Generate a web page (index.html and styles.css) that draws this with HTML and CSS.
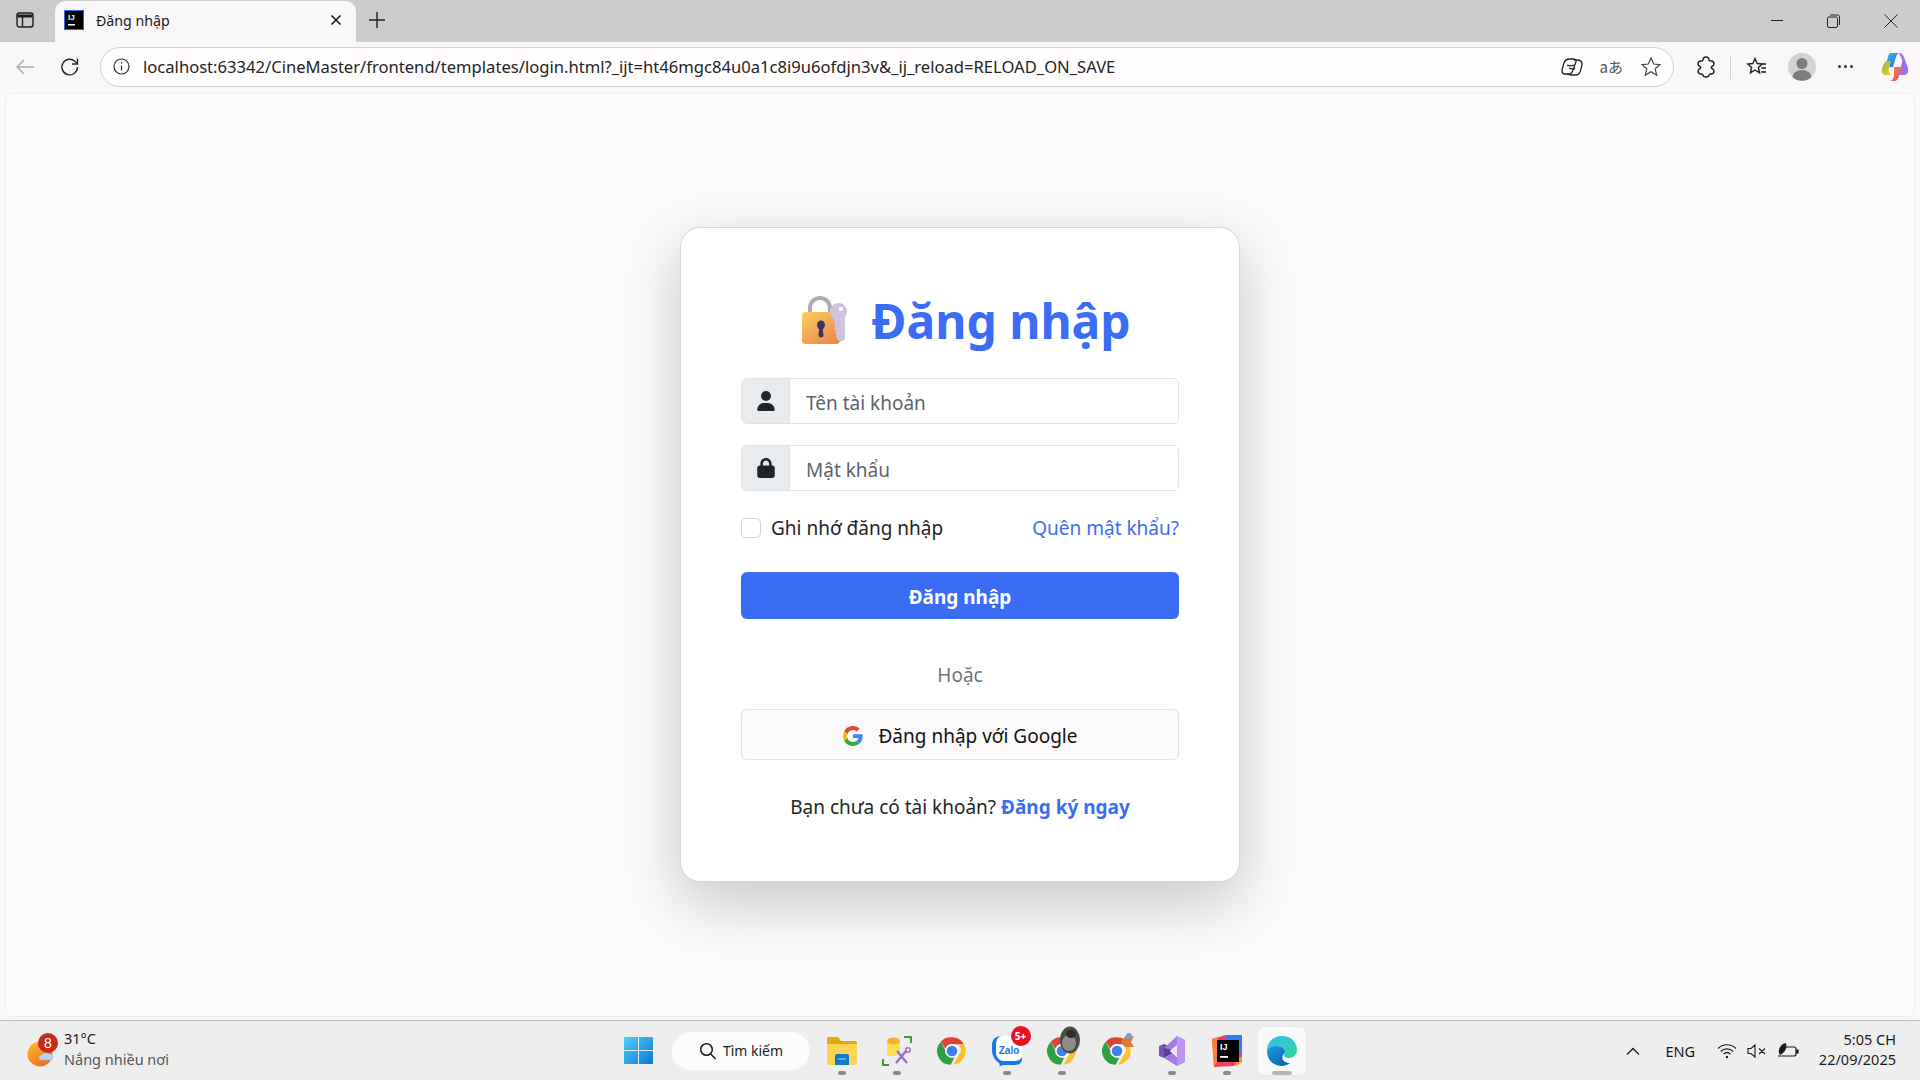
FILE: index.html
```html
<!DOCTYPE html>
<html lang="vi">
<head>
  <meta charset="utf-8">
  <title>Đăng nhập</title>
  <link rel="stylesheet" href="styles.css">
</head>
<body>
  <svg class="defs" width="0" height="0" aria-hidden="true">
    <defs>
      <symbol id="chrome" viewBox="0 0 48 48">
        <path d="M24 2a22 22 0 0 1 19 11H24a11 11 0 0 0-10.500 7.500L6 9A22 22 0 0 1 24 2z" fill="#db4437"/>
        <path d="M43 13a22 22 0 0 1-17 33l9-16a11 11 0 0 0-1-17z" fill="#fbc02d"/>
        <path d="M6 9l8 15a11 11 0 0 0 14 9.500L22 46A22 22 0 0 1 6 9z" fill="#2f9e44"/>
        <circle cx="24" cy="24" r="11" fill="#fff"/>
        <circle cx="24" cy="24" r="8.500" fill="#3f7fe8"/>
      </symbol>
    </defs>
  </svg>

  <header class="titlebar">
    <div class="sidebar-btn">
      <svg width="18" height="18" viewBox="0 0 18 18" fill="none" stroke="#1c1c1c" stroke-width="1.400">
        <rect x="1" y="2" width="16" height="14" rx="2.500"/>
        <path d="M1.500 5h15" stroke-width="3"/>
        <path d="M6.500 5v11"/>
      </svg>
    </div>
    <div class="tab">
      <svg class="favicon" width="20" height="20" viewBox="0 0 20 20">
        <rect x="0.500" y="0.500" width="19" height="19" fill="#000" stroke="#2c66d8"/>
        <text x="4" y="9.500" class="favicon-text">IJ</text>
        <rect x="4" y="14" width="7" height="1.500" fill="#fff"/>
      </svg>
      <span class="tab-title">Đăng nhập</span>
      <svg class="tab-close" width="12" height="12" viewBox="0 0 12 12" stroke="#1a1a1a" stroke-width="1.600">
        <path d="M1.500 1.500l9 9M10.500 1.500l-9 9"/>
      </svg>
    </div>
    <svg class="new-tab" width="18" height="18" viewBox="0 0 18 18" stroke="#222" stroke-width="1.400">
      <path d="M9 1v16M1 9h16"/>
    </svg>
    <div class="window-controls">
      <svg width="12" height="12" viewBox="0 0 12 12" stroke="#222"><path d="M0 5.500h12"/></svg>
      <svg width="13" height="14" viewBox="0 0 13 14" fill="none" stroke="#222"><rect x="0.500" y="3" width="10" height="10.500" rx="1.500"/><path d="M3 1h7.500A2 2 0 0 1 12.500 3v8"/></svg>
      <svg width="14" height="14" viewBox="0 0 14 14" stroke="#222"><path d="M0.500 0.500l13 13M13.500 0.500l-13 13"/></svg>
    </div>
  </header>

  <nav class="toolbar">
    <svg class="tool-icon" width="20" height="20" viewBox="0 0 20 20" fill="none" stroke="#a8a8a8" stroke-width="1.300">
      <path d="M19 10H2M9 3l-7 7 7 7"/>
    </svg>
    <svg class="tool-icon reload" width="22" height="22" viewBox="0 0 22 22" fill="none" stroke="#2b2b2b" stroke-width="1.400">
      <path d="M18.500 11a7.800 7.800 0 1 1-2.400-5.600L18.500 8"/>
      <path d="M18.500 2.500V8H13"/>
    </svg>
    <div class="address-bar">
      <svg width="17" height="17" viewBox="0 0 17 17" fill="none" stroke="#333" stroke-width="1.200">
        <circle cx="8.500" cy="8.500" r="7.500"/>
        <path d="M8.500 7.500v5M8.500 4.200v1.500"/>
      </svg>
      <span class="url">localhost:63342/CineMaster/frontend/templates/login.html?_ijt=ht46mgc84u0a1c8i9u6ofdjn3v&amp;_ij_reload=RELOAD_ON_SAVE</span>
      <div class="address-actions">
        <svg width="22" height="20" viewBox="0 0 22 20" fill="none" stroke="#222" stroke-width="1.300">
          <path d="M9 2c-3 0-5 1-6 4-1 3-2 6-2 8 0 2 1 3 3 3h4c2 0 3-1 4-4l3-8c.5-2-1-3-3-3z"/>
          <path d="M13 3h3c3 0 5 1 5 4 0 2-1 5-2 8-1 2-2 3-4 3h-5c-2 0-3-.5-4-1"/>
          <path d="M6 8c2 1 5 1 7 0M8 11c2 1 4 1 6 .5"/>
        </svg>
        <span class="translate-icon">aあ</span>
        <svg width="22" height="22" viewBox="0 0 22 22" fill="none" stroke="#444" stroke-width="1.200">
          <path d="M11 2l2.700 6 6.300.6-4.800 4.200 1.500 6.400L11 15.800l-5.700 3.400 1.500-6.400L2 8.600 8.300 8z"/>
        </svg>
      </div>
    </div>
    <div class="toolbar-right">
      <svg class="ext" width="20" height="22" viewBox="0 0 20 22" fill="none" stroke="#222" stroke-width="1.400">
        <path d="M7 4c0-2 1-3 3-3s3 1 3 3c0 1 1 1 2 1 2 0 3 1 3 3 0 1-1 2-2 2.500-1 .5-1 1.500 0 2 1 .5 2 1.500 2 2.500 0 2-1 3-3 3-1 0-2 0-2 1 0 1-1 2-3 2s-3-1-3-2c0-1-1-1-2-1-2 0-3-1-3-3 0-1 1-2 2-2.500 1-.5 1-1.500 0-2-1-.5-2-1.500-2-2.500 0-2 1-3 3-3 1 0 2 0 2-1z"/>
      </svg>
      <span class="sep"></span>
      <svg class="fav" width="22" height="22" viewBox="0 0 22 22" fill="none" stroke="#222" stroke-width="1.400">
        <path d="M9 2.500l2.200 5 5 .5-3.800 3.500 1.100 5.300L9 14l-4.500 2.800 1.100-5.300L1.800 8l5-.5z"/>
        <path d="M15 8h5M15.500 12h4.500M15 16h5"/>
      </svg>
      <svg class="avatar" width="28" height="28" viewBox="0 0 28 28">
        <circle cx="14" cy="14" r="14" fill="#d5d3d1"/>
        <circle cx="14" cy="10.500" r="5.500" fill="#7f7d7b"/>
        <path d="M4.500 24a9.500 7 0 0 1 19 0 14 14 0 0 1-19 0z" fill="#7f7d7b"/>
      </svg>
      <span class="more-dots"><i></i><i></i><i></i></span>
      <svg class="copilot" width="28" height="30" viewBox="0 0 28 30">
        <defs>
          <linearGradient id="copA" x1="0" y1="0" x2="1" y2="1"><stop offset="0" stop-color="#3bb5e8"/><stop offset="1" stop-color="#2f6fe0"/></linearGradient>
          <linearGradient id="copB" x1="0" y1="0" x2="1" y2="1"><stop offset="0" stop-color="#b06ce0"/><stop offset="1" stop-color="#8e7be8"/></linearGradient>
          <linearGradient id="copC" x1="0" y1="0" x2="1" y2="1"><stop offset="0" stop-color="#8cc63f"/><stop offset="1" stop-color="#f4c33d"/></linearGradient>
          <linearGradient id="copD" x1="0" y1="0" x2="1" y2="1"><stop offset="0" stop-color="#f08a4b"/><stop offset="1" stop-color="#e84f6c"/></linearGradient>
        </defs>
        <path d="M10 1h9c-2 0-3 1-4 4l-3 10H4l3-10c1-3 1-4 3-4z" fill="url(#copA)"/>
        <path d="M18 1c3 0 4 2 5 4l4 11c1 4-1 7-4 7h-6l4-12c1-3-1-5-3-10z" fill="url(#copB)"/>
        <path d="M5 9h5l-2 7c-1 3 0 6 3 7H5c-3 0-5-2-4-6 1-4 2-6 4-8z" fill="url(#copC)"/>
        <path d="M13 15h8l-3 9c-1 3-2 5-5 5h-5c3 0 4-2 5-5z" fill="url(#copD)"/>
      </svg>
    </div>
  </nav>

  <main class="page">
    <section class="login-card">
      <h1 class="login-title">
        <svg class="lock-emoji" width="48" height="50" viewBox="0 0 48 50">
          <defs>
            <linearGradient id="lockBody" x1="0" y1="0" x2="0.700" y2="1"><stop offset="0" stop-color="#fbd15f"/><stop offset="1" stop-color="#ee8a4e"/></linearGradient>
          </defs>
          <path d="M9 20V13a10 10 0 0 1 20 0v8" fill="none" stroke="#b0a9b0" stroke-width="4"/>
          <rect x="1" y="17" width="38" height="32" rx="4" fill="url(#lockBody)"/>
          <ellipse cx="20" cy="30" rx="4" ry="4.500" fill="#3b3468"/>
          <path d="M18.500 31h3l1 9a2.500 2.500 0 0 1-5 0z" fill="#3b3468"/>
          <path d="M33 24c-1 0-2-1-2-2a8.500 8.500 0 1 1 13 0v21a4 4 0 0 1-7 2l-2-3 1-2-2-2 1-2-2-2 1-2z" fill="#cfc3e0"/>
          <circle cx="40" cy="14" r="2.200" fill="#fff"/>
        </svg>
        <span>Đăng nhập</span>
      </h1>

      <form class="login-form">
        <div class="input-group">
          <span class="input-addon">
            <svg width="18" height="20" viewBox="0 0 448 512" fill="#212529"><path d="M224 256A128 128 0 1 0 224 0a128 128 0 1 0 0 256zm-45.700 48C79.800 304 0 383.800 0 482.300C0 498.700 13.300 512 29.700 512H418.300c16.400 0 29.700-13.300 29.700-29.700C448 383.800 368.200 304 269.700 304H178.300z"/></svg>
          </span>
          <input type="text" class="form-input" placeholder="Tên tài khoản">
        </div>
        <div class="input-group">
          <span class="input-addon">
            <svg width="18" height="20" viewBox="0 0 448 512" fill="#212529"><path d="M144 144v48H304V144c0-44.200-35.800-80-80-80s-80 35.800-80 80zM80 192V144C80 64.500 144.500 0 224 0s144 64.500 144 144v48h16c35.300 0 64 28.700 64 64V448c0 35.300-28.700 64-64 64H64c-35.300 0-64-28.700-64-64V256c0-35.300 28.700-64 64-64H80z"/></svg>
          </span>
          <input type="password" class="form-input" placeholder="Mật khẩu">
        </div>

        <div class="options-row">
          <label class="remember"><span class="checkbox"></span>Ghi nhớ đăng nhập</label>
          <a href="#" class="forgot">Quên mật khẩu?</a>
        </div>

        <button type="button" class="btn-login">Đăng nhập</button>
        <div class="divider">Hoặc</div>
        <button type="button" class="btn-google">
          <svg width="20" height="20" viewBox="0 0 48 48">
            <path fill="#ea4335" d="M24 9.500c3.500 0 6.700 1.200 9.200 3.600l6.900-6.900C35.900 2.400 30.500 0 24 0 14.600 0 6.500 5.400 2.600 13.200l8 6.200C12.500 13.700 17.800 9.500 24 9.500z"/>
            <path fill="#4285f4" d="M47 24.500c0-1.600-.1-3.100-.4-4.500H24v9h12.900c-.6 3-2.200 5.500-4.700 7.200l7.700 6c4.500-4.200 7.100-10.300 7.100-17.700z"/>
            <path fill="#fbbc05" d="M10.500 28.600c-.5-1.500-.8-3-.8-4.600s.3-3.200.8-4.600l-8-6.200C.9 16.500 0 20.100 0 24s.9 7.500 2.600 10.800z"/>
            <path fill="#34a853" d="M24 48c6.500 0 11.900-2.100 15.900-5.800l-7.700-6c-2.200 1.400-4.900 2.300-8.200 2.300-6.200 0-11.500-4.200-13.400-9.900l-8 6.200C6.500 42.600 14.600 48 24 48z"/>
          </svg>
          Đăng nhập với Google
        </button>
        <p class="signup">Bạn chưa có tài khoản? <a href="#">Đăng ký ngay</a></p>
      </form>
    </section>
  </main>

  <footer class="taskbar">
    <div class="weather">
      <svg class="weather-icon" width="36" height="36" viewBox="0 0 36 36">
        <defs>
          <linearGradient id="sun" x1="0" y1="0" x2="0.600" y2="1"><stop offset="0" stop-color="#f8c132"/><stop offset="1" stop-color="#f0701c"/></linearGradient>
        </defs>
        <circle cx="14" cy="21" r="12.500" fill="url(#sun)"/>
        <path d="M16 27c-2 0-3-1-3-2.500s1.500-2.500 3-2.500c1-2 5-3 7-1 2 0 4 1.500 4 3.500S25 27 24 27z" fill="#b7d3f4" stroke="#8fb4e6" stroke-width="0.500"/>
        <circle cx="22" cy="10" r="10" fill="#c42b1c"/>
        <text x="22" y="15" class="weather-count">8</text>
      </svg>
      <div class="weather-text">
        <span class="temp">31°C</span>
        <span class="forecast">Nắng nhiều nơi</span>
      </div>
    </div>

    <div class="task-center">
      <span class="start-btn">
        <svg width="29" height="29" viewBox="0 0 29 29">
          <defs><linearGradient id="win" x1="0" y1="0" x2="1" y2="1"><stop offset="0" stop-color="#4fd0fb"/><stop offset="1" stop-color="#0a78d6"/></linearGradient></defs>
          <path d="M1 1h13v13H0V2a1 1 0 0 1 1-1zM15 1h13a1 1 0 0 1 1 1v12H15zM0 15h14v13H1a1 1 0 0 1-1-1zM15 15h14v12a1 1 0 0 1-1 1H15z" fill="url(#win)"/>
        </svg>
      </span>
      <div class="search-box">
        <svg width="18" height="18" viewBox="0 0 18 18" fill="none" stroke="#1b1b1b" stroke-width="1.500"><circle cx="7.500" cy="7.500" r="5.800"/><path d="M11.500 11.800L16.500 17"/></svg>
        <span>Tìm kiếm</span>
      </div>

      <span class="app running">
        <svg width="30" height="28" viewBox="0 0 30 28">
          <path d="M0 2a2 2 0 0 1 2-2h9l3 4h14a2 2 0 0 1 2 2v4H0z" fill="#e2a60e"/>
          <path d="M0 7h30v19a2 2 0 0 1-2 2H2a2 2 0 0 1-2-2z" fill="#fcd455"/>
          <path d="M8 19a2 2 0 0 1 2-2h10a2 2 0 0 1 2 2v9H8z" fill="#0f78cf"/>
          <path d="M11 22h8" stroke="#6fc3f4" stroke-width="1.500"/>
        </svg>
      </span>
      <span class="app running">
        <svg width="30" height="30" viewBox="0 0 30 30" fill="none">
          <path d="M1 23v6h6M22 1h7v6" stroke="#3f9b3a" stroke-width="2"/>
          <path d="M5 5h13v12l-6 3H5z" fill="#fbe04b"/>
          <ellipse cx="11.500" cy="5" rx="6.500" ry="3.500" fill="#f2b035"/>
          <path d="M14 27l10-12M25 27L15 15" stroke="#9a6ad0" stroke-width="2.400"/>
          <circle cx="26" cy="14" r="2.200" stroke="#9a6ad0" stroke-width="1.500"/>
        </svg>
      </span>
      <span class="app">
        <svg width="30" height="30"><use href="#chrome"/></svg>
      </span>
      <span class="app running">
        <svg width="30" height="34" viewBox="0 0 30 34">
          <path d="M10 2h12c5 0 8 3 8 8v15c0 4-3 6-7 6H12c-2 0-3 1-5 1.500 1-1.500 1-2.500 0-3.500C3 26 0 22 0 16v-5C0 5 4 2 10 2z" fill="#1677ee"/>
          <path d="M10 2h12c5 0 8 3 8 8v13c-2 3-4 4-7 4H11c-3 0-6-3-7-7v-9c0-5 2-9 6-9z" fill="#fff"/>
          <text x="17" y="20" class="zalo-text">Zalo</text>
        </svg>
        <span class="app-badge">5+</span>
      </span>
      <span class="app running">
        <svg width="30" height="30"><use href="#chrome"/></svg>
        <svg class="app-overlay" width="22" height="28" viewBox="0 0 22 28">
          <ellipse cx="11" cy="14" rx="10" ry="13.500" fill="#4a4a48"/>
          <ellipse cx="10" cy="17" rx="7" ry="8" fill="#8c8c88"/>
          <ellipse cx="12" cy="8" rx="5" ry="4" fill="#2e2e2c"/>
        </svg>
      </span>
      <span class="app">
        <svg width="30" height="30"><use href="#chrome"/></svg>
        <svg class="app-overlay small" width="16" height="16" viewBox="0 0 16 16">
          <path d="M1 10l6-8 2 3 5-1-3 6 3 5H5z" fill="#d9793a"/>
          <circle cx="9" cy="4" r="3" fill="#6ea3d8"/>
        </svg>
      </span>
      <span class="app running">
        <svg width="26" height="30" viewBox="0 0 26 30">
          <path d="M0 10l5-2 9 7-9 7-5-2z" fill="#7b54b6"/>
          <path d="M5 8l13 7-13 7z" fill="#5d3e99"/>
          <path d="M18 0l8 4v22l-8 4-13-8 13-7-13-3z" fill="#a67ae6"/>
          <path d="M18 9v12l-7-6z" fill="#eee"/>
          <path d="M18 0l8 4v22l-8 4z" fill="#bd95ef"/>
          <path d="M18 9l-7 6 7 6z" fill="#efe6fb"/>
        </svg>
      </span>
      <span class="app running">
        <svg width="30" height="32" viewBox="0 0 30 32">
          <path d="M0 4l14-4 16 1v22l-8 8-20 1z" fill="#ef3f5f"/>
          <path d="M14 0h16v18L14 12z" fill="#2f7df0"/>
          <path d="M0 4l6-2v24l-4 5z" fill="#f5803a"/>
          <path d="M22 22h8v5l-6 4z" fill="#f7941d"/>
          <rect x="5" y="5" width="22" height="22" fill="#000"/>
          <text x="8" y="15" class="ij-text">IJ</text>
          <rect x="8" y="21" width="8" height="1.800" fill="#fff"/>
        </svg>
      </span>
      <span class="app active">
        <svg width="30" height="30" viewBox="0 0 30 30">
          <defs>
            <linearGradient id="edgeA" x1="0" y1="0" x2="1" y2="1"><stop offset="0" stop-color="#35c1f1"/><stop offset="1" stop-color="#2fd39a"/></linearGradient>
            <linearGradient id="edgeB" x1="0" y1="0" x2="1" y2="1"><stop offset="0" stop-color="#1b9de2"/><stop offset="1" stop-color="#0c5aa8"/></linearGradient>
          </defs>
          <path d="M15 0c9 0 15 6 15 14 0 5-4 8-8 8-3 0-5-1-5-3 0-1 1-1 1-3 0-3-3-6-8-6S1 13 0 15C0 6 6 0 15 0z" fill="url(#edgeA)"/>
          <path d="M0 15c1-3 5-5 9-5 6 0 9 3 9 6 0 1-1 2-2 3-2 4 1 8 7 8 0 0-4 3-8 3C6 30 0 24 0 15z" fill="url(#edgeB)"/>
        </svg>
      </span>
    </div>

    <div class="tray">
      <svg width="14" height="8" viewBox="0 0 14 8" fill="none" stroke="#1b1b1b" stroke-width="1.400"><path d="M1 7.500l6-6 6 6"/></svg>
      <span class="lang">ENG</span>
      <svg class="wifi" width="20" height="16" viewBox="0 0 20 16" fill="none" stroke="#1b1b1b" stroke-width="1.200">
        <path d="M1 5.500c5-5 13-5 18 0M3.800 8.500c3.500-3.500 8.900-3.500 12.400 0M6.600 11.200c2-2 4.800-2 6.800 0"/>
        <circle cx="10" cy="14" r="1.200" fill="#1b1b1b" stroke="none"/>
      </svg>
      <svg class="volume" width="20" height="14" viewBox="0 0 20 14" fill="none" stroke="#1b1b1b" stroke-width="1.100">
        <path d="M1 4.500h3L8 1v12L4 9.500H1zM12 4.500l6 5.500M18 4.500L12 10"/>
      </svg>
      <svg class="battery" width="22" height="18" viewBox="0 0 22 18" fill="none" stroke="#1b1b1b" stroke-width="1.200">
        <path d="M9 5h8a2 2 0 0 1 2 2v5a2 2 0 0 1-2 2H1"/>
        <path d="M19 8h2v3h-2" fill="#1b1b1b"/>
        <path d="M3 13C0 9 3 2 9 1c1 4 0 9-6 12z" fill="#1b1b1b" stroke="none"/>
      </svg>
      <div class="clock">
        <span>5:05 CH</span>
        <span>22/09/2025</span>
      </div>
    </div>
  </footer>
</body>
</html>
```
FILE: styles.css
```css
* {
  box-sizing: border-box;
}

html,
body {
  height: 100%;
}

body {
  margin: 0;
  display: flex;
  flex-direction: column;
  height: 1080px;
  overflow: hidden;
  font-family: "Noto Sans", "Open Sans", sans-serif;
  background-color: #f9f7f8;
  color: #212529;
}

.defs {
  position: absolute;
}

/* Browser title bar */
.titlebar {
  display: flex;
  align-items: center;
  flex: 0 0 42px;
  padding-bottom: 3px;
  background-color: #cdcccd;
}

.sidebar-btn {
  display: flex;
  justify-content: center;
  width: 55px;
  padding-right: 5px;
}

.tab {
  display: flex;
  align-items: center;
  align-self: stretch;
  width: 301px;
  margin-top: 1px;
  margin-bottom: -3px;
  padding: 0 14px 3px 9px;
  background-color: #f9f7f8;
  border-radius: 10px 10px 0 0;
}

.favicon-text {
  font-family: "Liberation Sans", sans-serif;
  font-size: 8px;
  font-weight: 700;
  fill: #fff;
}

.tab-title {
  flex: 1;
  margin-left: 12px;
  font-size: 14.200px;
  color: #1a1a1a;
}

.new-tab {
  margin-left: 12px;
}

.window-controls {
  display: flex;
  align-items: center;
  gap: 44px;
  margin-left: auto;
  margin-right: 22px;
  padding-top: 2px;
}

/* Browser toolbar */
.toolbar {
  display: flex;
  align-items: center;
  flex: 0 0 51px;
  padding: 0 0 2px 15px;
  background-color: #f9f7f8;
}

.reload {
  margin-left: 24px;
}

.address-bar {
  display: flex;
  align-items: center;
  flex: 0 0 1574px;
  height: 40px;
  margin-left: 19px;
  padding: 0 11px 0 12px;
  background-color: #fffdfe;
  border: 1.500px solid #d2d0d1;
  border-radius: 20px;
}

.url {
  margin-left: 13px;
  font-size: 16.600px;
  color: #242424;
  white-space: nowrap;
}

.address-actions {
  display: flex;
  align-items: center;
  gap: 17px;
  margin-left: auto;
}

.translate-icon {
  font-family: "Noto Sans CJK JP", sans-serif;
  font-size: 15px;
  color: #555;
}

.toolbar-right {
  display: flex;
  align-items: center;
  margin-left: 22px;
}

.sep {
  width: 1px;
  height: 24px;
  margin: 0 15px 0 14px;
  background-color: #d0cecf;
}

.avatar {
  margin-left: 20px;
}

.more-dots {
  display: flex;
  gap: 3px;
  margin-left: 22px;
}

.more-dots i {
  width: 3px;
  height: 3px;
  background-color: #333;
  border-radius: 50%;
}

.copilot {
  margin-left: 28px;
}

/* Page area */
.page {
  display: flex;
  align-items: center;
  justify-content: center;
  flex: 0 0 924px;
  margin: 0 5px;
  padding-bottom: 1px;
  background-color: #fbf9fa;
  border: 1px solid #eeeced;
  border-radius: 8px;
  overflow: hidden;
}

.login-card {
  width: 560px;
  padding: 60px 60px 62px;
  background-color: #fff;
  border: 1px solid #d6d6d9;
  border-radius: 20px;
  box-shadow: 0 20px 60px rgba(0, 0, 0, 0.2);
}

.login-title {
  display: flex;
  align-items: center;
  justify-content: center;
  height: 64px;
  margin: 0 0 26px;
  font-size: 48px;
  font-weight: 700;
  color: #3b6df4;
}

.lock-emoji {
  margin: 0 22px 0 12px;
}

.input-group {
  display: flex;
  height: 46px;
  margin-bottom: 21px;
  border: 1px solid #dee2e6;
  border-radius: 6px;
  overflow: hidden;
}

.input-addon {
  display: flex;
  align-items: center;
  justify-content: center;
  width: 48px;
  background-color: #e9ecef;
  border-right: 1px solid #dee2e6;
}

.form-input {
  flex: 1;
  min-width: 0;
  padding: 4px 16px 0;
  font-family: inherit;
  font-size: 19px;
  border: none;
  outline: none;
}

.form-input::placeholder {
  color: #5c636a;
  opacity: 1;
}

.options-row {
  display: flex;
  align-items: center;
  justify-content: space-between;
  height: 24px;
  margin-top: 25px;
  font-size: 19px;
}

.remember {
  display: flex;
  align-items: center;
  gap: 10px;
}

.checkbox {
  width: 20px;
  height: 20px;
  background-color: #fff;
  border: 1px solid #ced4da;
  border-radius: 5px;
}

.forgot {
  color: #3b6df4;
  text-decoration: none;
}

.btn-login {
  display: block;
  width: 100%;
  height: 47px;
  margin-top: 32px;
  padding-top: 4px;
  font-family: inherit;
  font-size: 19px;
  font-weight: 700;
  color: #fff;
  background-color: #3b6df4;
  border: none;
  border-radius: 6px;
}

.divider {
  height: 24px;
  margin-top: 44px;
  font-size: 19px;
  line-height: 24px;
  text-align: center;
  color: #6c757d;
}

.btn-google {
  display: flex;
  align-items: center;
  justify-content: center;
  gap: 16px;
  width: 100%;
  height: 51px;
  margin-top: 22px;
  padding-top: 4px;
  font-family: inherit;
  font-size: 19px;
  color: #111;
  background-color: #fbf9fa;
  border: 1px solid #dee2e6;
  border-radius: 6px;
}

.signup {
  height: 24px;
  margin: 35px 0 0;
  font-size: 19px;
  line-height: 24px;
  text-align: center;
}

.signup a {
  font-weight: 700;
  color: #3b6df4;
  text-decoration: none;
}

/* Windows taskbar */
.taskbar {
  display: grid;
  grid-template-columns: 614px auto 1fr;
  align-items: center;
  flex: 1;
  margin-top: 3px;
  background-color: #eeeeee;
  border-top: 1px solid #bdbcbc;
}

.weather {
  display: flex;
  align-items: center;
  padding-left: 26px;
}

.weather-count {
  font-family: "Liberation Sans", sans-serif;
  font-size: 14px;
  fill: #fff;
  text-anchor: middle;
}

.weather-text {
  display: flex;
  flex-direction: column;
  margin-left: 2px;
  padding-bottom: 4px;
  font-size: 14.500px;
  line-height: 21px;
  color: #1b1b1b;
}

.forecast {
  color: #555;
}

.task-center {
  display: flex;
  align-items: center;
}

.start-btn {
  display: flex;
  align-items: center;
  justify-content: center;
  width: 48px;
}

.search-box {
  display: flex;
  align-items: center;
  justify-content: center;
  gap: 6px;
  width: 138px;
  height: 38px;
  margin: 0 4.500px 0 10px;
  font-size: 14px;
  color: #1b1b1b;
  background-color: #fbfbfb;
  border-radius: 19px;
}

.app {
  position: relative;
  display: flex;
  align-items: center;
  justify-content: center;
  width: 55px;
  height: 48px;
}

.app.running::after {
  content: "";
  position: absolute;
  bottom: 0;
  left: 23.500px;
  width: 8px;
  height: 4px;
  background-color: #8a8a8a;
  border-radius: 2px;
}

.app.active::before {
  content: "";
  position: absolute;
  top: 0;
  left: 3.500px;
  width: 48px;
  height: 48px;
  background-color: #f9f9f9;
  border-radius: 5px;
  box-shadow: 0 0 1px rgba(0, 0, 0, 0.2);
}

.app.active svg {
  position: relative;
}

.app.active::after {
  content: "";
  position: absolute;
  bottom: 0;
  left: 17.500px;
  width: 20px;
  height: 4px;
  background-color: #b5b5b5;
  border-radius: 2px;
}

.app-badge {
  position: absolute;
  top: -1px;
  right: 4px;
  width: 20px;
  height: 20px;
  font-size: 10px;
  font-weight: 700;
  line-height: 20px;
  text-align: center;
  color: #fff;
  background-color: #e8121e;
  border-radius: 50%;
}

.app-overlay {
  position: absolute;
  top: -1px;
  right: 9px;
}

.app-overlay.small {
  top: 5px;
}

.zalo-text {
  font-family: "Liberation Sans", sans-serif;
  font-size: 10px;
  font-weight: 700;
  fill: #1677ee;
  text-anchor: middle;
}

.ij-text {
  font-family: "Liberation Sans", sans-serif;
  font-size: 9px;
  font-weight: 700;
  fill: #fff;
}

.tray {
  display: flex;
  align-items: center;
  padding-left: 316px;
  font-size: 14.500px;
  color: #1b1b1b;
}

.lang {
  margin-left: 26px;
}

.wifi {
  margin-left: 22px;
}

.volume {
  margin-left: 10px;
}

.battery {
  margin-left: 10px;
}

.clock {
  display: flex;
  flex-direction: column;
  align-items: flex-end;
  margin-left: auto;
  margin-right: 24px;
  padding-bottom: 4px;
  line-height: 20px;
}
```
